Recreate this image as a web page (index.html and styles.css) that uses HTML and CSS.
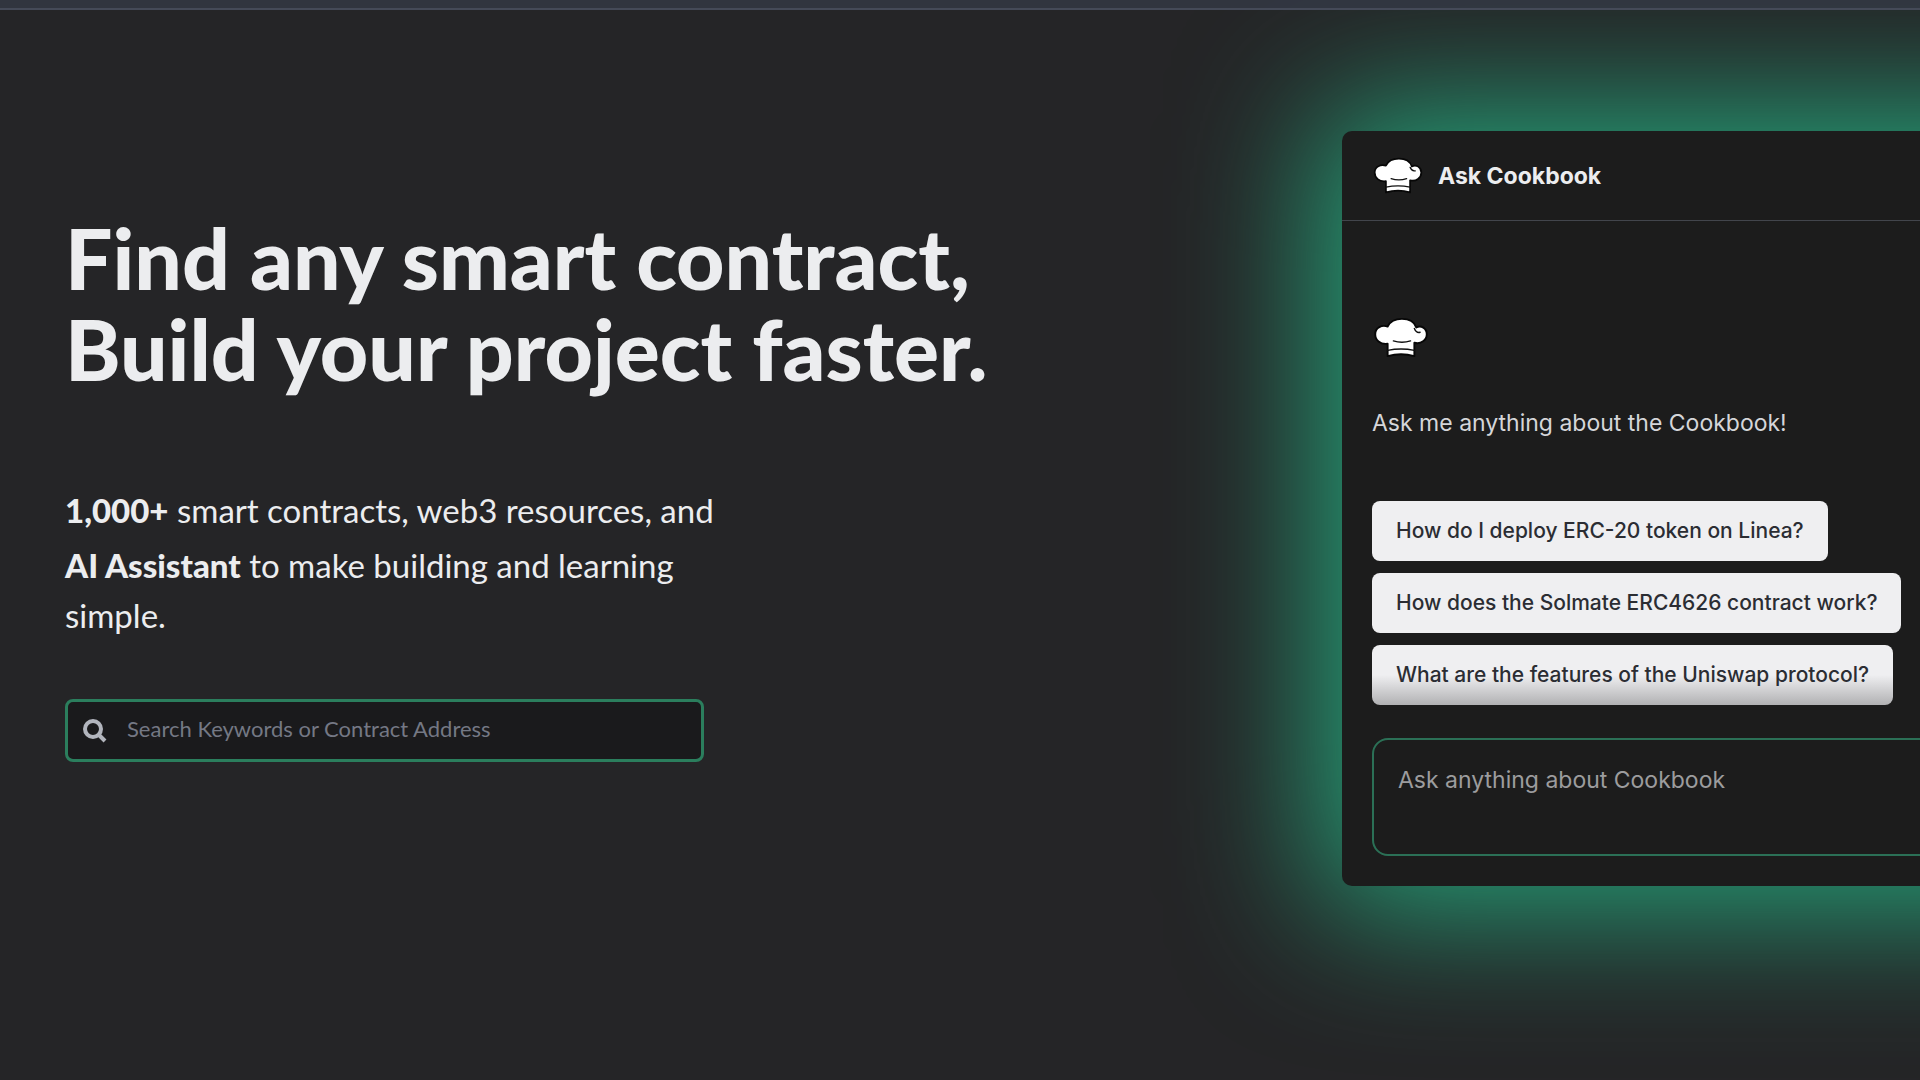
FILE: index.html
```html
<!DOCTYPE html>
<html lang="en">
<head>
<meta charset="utf-8">
<meta name="viewport" content="width=device-width, initial-scale=1">
<title>Cookbook</title>
<link rel="stylesheet" href="styles.css">
</head>
<body>
<svg class="sprite" aria-hidden="true">
  <symbol id="chef-hat" viewBox="0 0 60 44">
    <path d="M16 28C8 29 3 24 3 18C3 11 10 8 16 10C19 4 24 2 31 2C38 2 44 5 46 11C51 8 57 12 57 18C57 24 51 29 44 27L44 41Q30 37 16 41Z" fill="#fff" stroke="#070707" stroke-width="2" stroke-linejoin="round"/>
    <path d="M44 12Q46 17 50 16M22 25Q31 28 40 25M16 35Q30 32 44 35" fill="none" stroke="#111" stroke-width="1.5" stroke-linecap="round"/>
  </symbol>
</svg>
<header class="topbar"></header>
<main class="hero">
  <section class="intro">
    <h1 class="title">Find any smart contract,<br>Build your project faster.</h1>
    <p class="lead"><strong>1,000+</strong> smart contracts, web3 resources, and<br><strong>AI Assistant</strong> to make building and learning<br>simple.</p>
    <form class="search" role="search">
      <svg class="search-icon" viewBox="0 0 24 24" aria-hidden="true"><circle cx="10" cy="10" r="8"/><path d="M16 16L22 22"/></svg>
      <input class="search-input" type="search" aria-label="Search" placeholder="Search Keywords or Contract Address">
    </form>
  </section>
  <section class="chat">
    <div class="chat-head">
      <svg class="hat" aria-hidden="true"><use href="#chef-hat"/></svg>
      <h2 class="chat-title">Ask Cookbook</h2>
    </div>
    <div class="chat-body">
      <svg class="hat hat-large" aria-hidden="true"><use href="#chef-hat"/></svg>
      <p class="greeting">Ask me anything about the Cookbook!</p>
      <div class="prompts">
        <button class="prompt" type="button">How do I deploy ERC-20 token on Linea?</button>
        <button class="prompt" type="button">How does the Solmate ERC4626 contract work?</button>
        <button class="prompt prompt-faded" type="button">What are the features of the Uniswap protocol?</button>
      </div>
      <textarea class="ask" aria-label="Ask anything about Cookbook" placeholder="Ask anything about Cookbook"></textarea>
    </div>
  </section>
</main>
</body>
</html>
```
FILE: styles.css
```css
* { box-sizing: border-box; }

body {
  margin: 0;
  min-height: 100vh;
  display: flex;
  flex-direction: column;
  overflow: hidden;
  background: #252527;
  color: #ecedef;
  font-family: Lato, sans-serif;
}

.sprite { display: none; }

.topbar {
  height: 10px;
  background: rgba(53, 57, 70, 0.8);
  border-bottom: 2px solid #454a58;
  z-index: 1;
}

.hero {
  flex: 1;
  display: grid;
  grid-template-columns: minmax(0, 70fr) minmax(578px, 30fr);
  align-items: start;
  padding-left: 65px;
}

.intro { padding-top: 202px; }

.title {
  margin: 0;
  font-size: 84px;
  line-height: 91px;
  font-weight: 900;
  white-space: nowrap;
}

.lead {
  margin: 89px 0 0;
  font-size: 33px;
  line-height: 45px;
}

.lead strong {
  line-height: 55px;
  font-weight: 900;
}

.search {
  display: flex;
  align-items: center;
  gap: 20px;
  width: 50%;
  min-width: 420px;
  height: 63px;
  margin-top: 61px;
  padding: 0 15px;
  border: 3px solid #2b7e5d;
  border-radius: 8px;
  background: #1a1a1c;
}

.search-icon {
  width: 24px;
  height: 24px;
  flex: none;
  fill: none;
  stroke: #b2b5bd;
  stroke-width: 4;
}

.search-input {
  flex: 1;
  min-width: 0;
  border: 0;
  padding: 0 0 4px;
  outline: 0;
  background: none;
  color: inherit;
  font: 22px/32px Lato, sans-serif;
}

.search-input::placeholder { color: #747884; }

.chat {
  margin: 121px -240px 0 0;
  border-radius: 10px;
  background: #1c1c1c;
  box-shadow: 0 0 140px 24px #25a47a;
  font-family: Inter, sans-serif;
}

.chat-head {
  display: flex;
  align-items: center;
  gap: 14px;
  height: 90px;
  padding: 0 30px;
  border-bottom: 1px solid #42454c;
}

.hat {
  display: block;
  width: 52px;
  height: 38px;
}

.hat-large {
  width: 58px;
  height: 42px;
}

.chat-title {
  margin: 0;
  font-size: 23px;
  font-weight: 700;
}

.chat-body { padding: 96px 0 30px 30px; }

.greeting {
  margin: 48px 0 62px;
  color: #d5d6d9;
  font-size: 23px;
  line-height: 32px;
}

.prompts {
  display: flex;
  flex-direction: column;
  align-items: flex-start;
  gap: 12px;
}

.prompt {
  height: 60px;
  padding: 0 24px;
  border: 0;
  border-radius: 8px;
  background: #efeff1;
  color: #2b2d33;
  font: 500 21px/32px Inter, sans-serif;
  white-space: nowrap;
}

.prompt-faded { background: linear-gradient(#efeff1 50%, #b1b1b3); }

.ask {
  display: block;
  width: 100%;
  height: 118px;
  margin-top: 33px;
  padding: 24px;
  border: 2px solid #2b7056;
  border-radius: 16px;
  outline: 0;
  resize: none;
  background: none;
  color: inherit;
  font: 23px/32px Inter, sans-serif;
}

.ask::placeholder { color: #9c9c9e; }
```
